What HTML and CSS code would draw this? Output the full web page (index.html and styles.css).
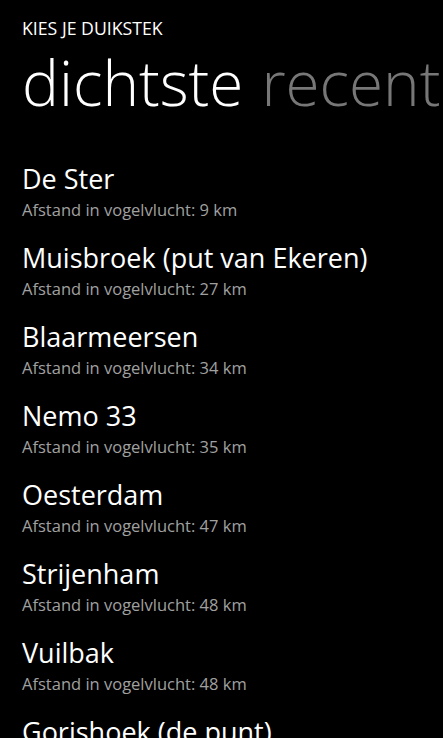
FILE: index.html
```html
<!DOCTYPE html>
<html lang="nl">
<head>
<meta charset="utf-8">
<title>Kies je duikstek</title>
<link rel="stylesheet" href="styles.css">
</head>
<body>
<div class="page">
  <div class="app-title">KIES JE DUIKSTEK</div>
  <div class="pivot">
    <span class="pivot-item active">dichtste</span>
    <span class="pivot-item">recent</span>
  </div>
  <ul class="list">
    <li class="item"><div class="name">De Ster</div><div class="dist">Afstand in vogelvlucht: 9 km</div></li>
    <li class="item"><div class="name">Muisbroek (put van Ekeren)</div><div class="dist">Afstand in vogelvlucht: 27 km</div></li>
    <li class="item"><div class="name">Blaarmeersen</div><div class="dist">Afstand in vogelvlucht: 34 km</div></li>
    <li class="item"><div class="name">Nemo 33</div><div class="dist">Afstand in vogelvlucht: 35 km</div></li>
    <li class="item"><div class="name">Oesterdam</div><div class="dist">Afstand in vogelvlucht: 47 km</div></li>
    <li class="item"><div class="name">Strijenham</div><div class="dist">Afstand in vogelvlucht: 48 km</div></li>
    <li class="item"><div class="name">Vuilbak</div><div class="dist">Afstand in vogelvlucht: 48 km</div></li>
    <li class="item"><div class="name">Gorishoek (de punt)</div><div class="dist">Afstand in vogelvlucht: 52 km</div></li>
  </ul>
</div>
</body>
</html>
```
FILE: styles.css
```css
html, body {
  margin: 0;
  padding: 0;
  background: #000;
  height: 100%;
  overflow: hidden;
}
.page {
  font-family: "Open Sans", "Noto Sans", sans-serif;
  color: #fff;
  padding: 17px 0 0 22px;
}
.app-title {
  font-size: 17.7px;
  line-height: 23px;
  font-weight: 400;
}
.pivot {
  display: flex;
  gap: 18px;
  white-space: nowrap;
  font-size: 62px;
  line-height: 84px;
  font-weight: 300;
}
.pivot-item {
  color: #777;
}
.pivot-item.active {
  color: #fff;
}
.list {
  list-style: none;
  margin: 37px 0 0 0;
  padding: 0;
  display: flex;
  flex-direction: column;
  gap: 19px;
}
.item {
  display: flex;
  flex-direction: column;
  gap: 2px;
}
.name {
  font-size: 27px;
  line-height: 36px;
  font-weight: 400;
  white-space: nowrap;
}
.dist {
  font-size: 16.5px;
  line-height: 22px;
  color: #a0a0a0;
  white-space: nowrap;
}
```
